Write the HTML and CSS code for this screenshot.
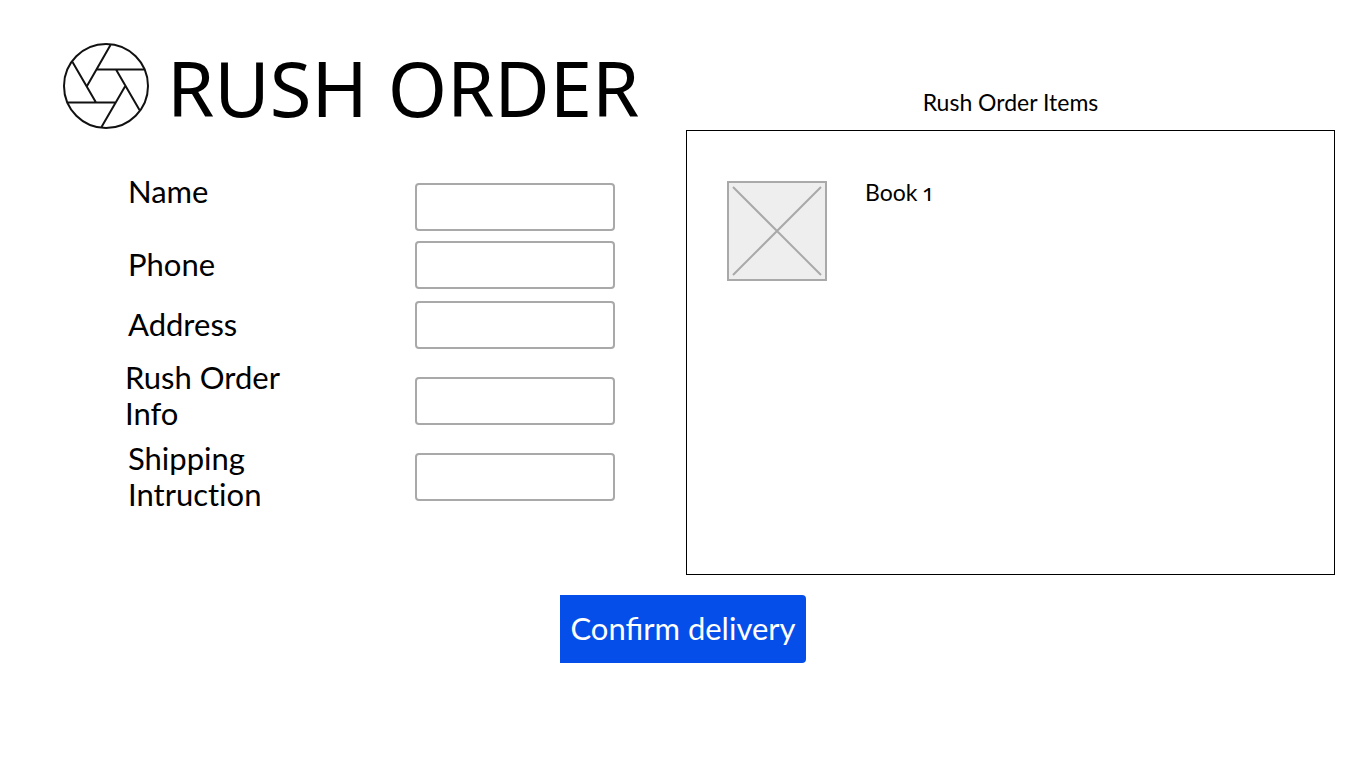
FILE: index.html
```html
<!DOCTYPE html>
<html lang="en">
<head>
<meta charset="utf-8">
<meta name="viewport" content="width=device-width, initial-scale=1">
<title>Rush Order</title>
<link rel="stylesheet" href="styles.css">
</head>
<body>
<form class="page">
  <div class="columns">
    <section class="details">
      <header class="brand">
        <svg class="logo" viewBox="0 0 86 86" fill="none" stroke="#111" stroke-width="2" aria-hidden="true">
          <circle cx="43" cy="43" r="42"/>
          <path d="M47.500 2L24 43M33.500 26.500H81M53 26.500L76.500 67M62 43.500L38.500 84M52 59.500H5M33 59.500L9.500 19"/>
        </svg>
        <h1 class="title">RUSH ORDER</h1>
      </header>
      <div class="fields">
        <div class="row row-first"><label class="label" for="name">Name</label><input class="input" id="name" type="text"></div>
        <div class="row row-phone"><label class="label" for="phone">Phone</label><input class="input" id="phone" type="text"></div>
        <div class="row row-address"><label class="label" for="address">Address</label><input class="input" id="address" type="text"></div>
        <div class="row row-info"><label class="label" for="info">Rush Order<br>Info</label><input class="input" id="info" type="text"></div>
        <div class="row"><label class="label" for="shipping">Shipping<br>Intruction</label><input class="input" id="shipping" type="text"></div>
      </div>
    </section>
    <section class="items">
      <h2 class="items-title">Rush Order Items</h2>
      <ul class="panel">
        <li class="item">
          <svg class="thumb" viewBox="0 0 100 100" fill="none" stroke="#a9a9a9" stroke-width="2" role="img" aria-label="Book cover">
            <rect x="1" y="1" width="98" height="98" fill="#eee"/>
            <path d="M6 6L94 94M94 6L6 94"/>
          </svg>
          <span class="item-name">Book 1</span>
        </li>
      </ul>
    </section>
  </div>
  <button class="confirm" type="button">Confirm delivery</button>
</form>
</body>
</html>
```
FILE: styles.css
```css
* { box-sizing: border-box; }

body {
  margin: 0;
  background: #fff;
  color: #000;
  font-family: Lato, "Noto Sans", sans-serif;
}

.page {
  display: flex;
  flex-direction: column;
  align-items: center;
  gap: 20px;
  padding: 43px 31px 40px;
}

.columns {
  align-self: stretch;
  display: grid;
  grid-template-columns: 623fr 649fr;
  padding-left: 32px;
}

.brand {
  display: flex;
  align-items: center;
  gap: 18px;
  height: 86px;
}

.logo {
  flex: none;
  width: 86px;
  height: 86px;
}

.title {
  margin: 0;
  padding-top: 4px;
  font: 400 76px/86px "Noto Sans", sans-serif;
  white-space: nowrap;
}

.fields {
  padding: 44px 71px 0 65px;
}

.row {
  display: flex;
  align-items: center;
  justify-content: space-between;
}

.row-first { align-items: flex-start; margin-bottom: 10px; }
.row-first .input { margin-top: 10px; }
.row-phone { margin-bottom: 12px; }
.row-address { margin-bottom: 10px; }
.row-info { margin-bottom: 7px; margin-left: -3px; }
.row-info .input { margin-top: 10px; }

.label {
  padding-bottom: 2px;
  font-size: 31px;
  font-variant-ligatures: none;
  line-height: 36px;
}

.input {
  width: 200px;
  height: 48px;
  padding: 0 10px;
  border: 2px solid #a9a9a9;
  border-radius: 4px;
  background: #fff;
  font: inherit;
  font-size: 24px;
}

.items {
  display: flex;
  flex-direction: column;
  padding-top: 45px;
}

.items-title {
  margin: 0 0 14px;
  font-size: 23px;
  font-weight: 400;
  line-height: 28px;
  text-align: center;
}

.panel {
  flex: 1;
  min-height: 445px;
  margin: 0;
  padding: 50px 40px;
  border: 1px solid #000;
  list-style: none;
}

.item {
  display: flex;
  gap: 38px;
}

.thumb {
  flex: none;
  width: 100px;
  height: 100px;
}

.item-name {
  font-size: 23px;
  font-variant-numeric: oldstyle-nums proportional-nums;
  line-height: 22px;
}

.confirm {
  padding: 15px 10px 17px;
  border: 0;
  border-radius: 0 4px 4px 0;
  background: #064eea;
  color: #fff;
  font: inherit;
  font-size: 31px;
  line-height: 36px;
}
```
